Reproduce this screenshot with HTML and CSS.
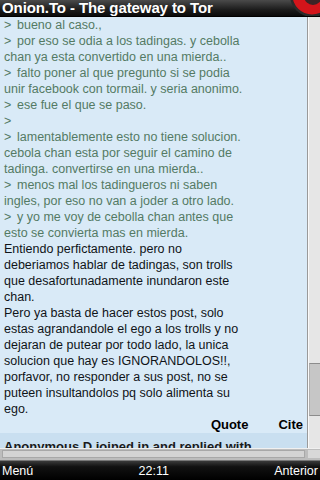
FILE: index.html
```html
<!DOCTYPE html>
<html>
<head>
<meta charset="utf-8">
<link rel="stylesheet" href="styles.css">
</head>
<body>
<div class="screen">
  <header class="titlebar">
    <span class="title">Onion.To - The gateway to Tor</span>
    <svg class="logo" width="34" height="17" viewBox="0 0 34 17">
      <circle cx="26" cy="-5" r="22" fill="#2b2b2b"/>
      <circle cx="26" cy="-5" r="19.5" fill="#d3151b"/>
      <circle cx="27" cy="-4" r="9" fill="#3c2426"/>
    </svg>
  </header>
  <div class="main">
    <div class="viewport">
      <div class="post">
        <div class="quote"><span class="gt">&gt;</span>bueno al caso.,</div>
        <div class="quote"><span class="gt">&gt;</span>por eso se odia a los tadingas. y cebolla<br>chan ya esta convertido en una mierda..</div>
        <div class="quote"><span class="gt">&gt;</span>falto poner al que pregunto si se podia<br>unir facebook con tormail. y seria anonimo.</div>
        <div class="quote"><span class="gt">&gt;</span>ese fue el que se paso.</div>
        <div class="quote"><span class="gt">&gt;</span></div>
        <div class="quote"><span class="gt">&gt;</span>lamentablemente esto no tiene solucion.<br>cebola chan esta por seguir el camino de<br>tadinga. convertirse en una mierda..</div>
        <div class="quote"><span class="gt">&gt;</span>menos mal los tadingueros ni saben<br>ingles, por eso no van a joder a otro lado.</div>
        <div class="quote"><span class="gt">&gt;</span>y yo me voy de cebolla chan antes que<br>esto se convierta mas en mierda.</div>
        <p class="text">Entiendo perfictamente. pero no<br>deberiamos hablar de tadingas, son trolls<br>que desafortunadamente inundaron este<br>chan.</p>
        <p class="text">Pero ya basta de hacer estos post, solo<br>estas agrandandole el ego a los trolls y no<br>dejaran de putear por todo lado, la unica<br>solucion que hay es IGNORANDOLOS!!,<br>porfavor, no responder a sus post, no se<br>puteen insultandolos pq solo alimenta su<br>ego.</p>
        <div class="actions"><span>Quote</span><span>Cite</span></div>
      </div>
      <div class="next">Anonymous D joined in and replied with</div>
    </div>
    <div class="vscroll"><div class="vthumb"></div></div>
  </div>
  <div class="hscroll"><div class="hthumb"></div><div class="hcorner"></div></div>
  <footer class="softkeys">
    <span>Menú</span>
    <span>22:11</span>
    <span>Anterior</span>
  </footer>
</div>
</body>
</html>
```
FILE: styles.css
```css
* { box-sizing: border-box; }
html, body { margin: 0; padding: 0; }
body {
  width: 320px;
  height: 480px;
  overflow: hidden;
  font-family: "Liberation Sans", Arial, sans-serif;
  background: #000;
}
.screen {
  width: 320px;
  height: 480px;
  display: flex;
  flex-direction: column;
}
.titlebar {
  position: relative;
  height: 17px;
  flex: none;
  background: linear-gradient(#4a4a4a, #1c1c1c 60%, #0a0a0a);
  border-bottom: 1px solid #000;
  overflow: hidden;
}
.title {
  display: block;
  padding-left: 2px;
  font-family: "Liberation Sans Narrow", "Liberation Sans", Arial, sans-serif;
  font-weight: bold;
  font-size: 15px;
  letter-spacing: -0.1px;
  line-height: 16px;
  color: #fff;
  white-space: nowrap;
}
.logo {
  position: absolute;
  right: 0;
  top: 0;
}
.main {
  height: 431px;
  flex: none;
  display: flex;
  background: #e9e9e9;
}
.viewport {
  width: 308px;
  flex: none;
  background: #d9eaf7;
  border-right: 1px solid #9a9a9a;
  overflow: hidden;
}
.post {
  padding: 0 4px;
  font-size: 12.5px;
  line-height: 16px;
}
.quote {
  color: #547a64;
}
.gt {
  display: inline-block;
  width: 13px;
}
.text {
  margin: 0;
  color: #101418;
}
.actions {
  display: flex;
  justify-content: flex-end;
  gap: 30px;
  padding-right: 0;
  font-weight: bold;
  font-size: 13px;
  color: #000;
}
.next {
  padding: 6px 4px 0;
  height: 20px;
  background: #c9dff0;
  font-size: 13px;
  line-height: 16px;
  font-weight: bold;
  color: #1a1a1a;
  white-space: nowrap;
}
.vscroll {
  flex: 1;
  position: relative;
  background: #e6e6e6;
  border-left: 1px solid #fafafa;
}
.vthumb {
  position: absolute;
  left: 0;
  right: 0;
  top: 346px;
  height: 53px;
  background: #c6c6c6;
  border-top: 1px solid #8c8c8c;
  border-bottom: 1px solid #8c8c8c;
  border-left: 1px solid #b0b0b0;
}
.hscroll {
  height: 12px;
  flex: none;
  display: flex;
  background: #bdbdbd;
  border-top: 1px solid #f0f0f0;
  padding: 1px 0 2px 2px;
}
.hthumb {
  width: 303px;
  background: #d4d4d4;
  border: 1px solid #a8a8a8;
}
.hcorner {
  flex: 1;
  margin-left: 3px;
  background: #d8d8d8;
}
.softkeys {
  height: 20px;
  flex: none;
  display: flex;
  justify-content: space-between;
  align-items: center;
  padding: 0 2px;
  background: linear-gradient(#3a3a3a, #111 30%, #000);
  border-top: 1px solid #777;
  color: #fff;
  font-size: 12.5px;
  line-height: 18px;
}
```
